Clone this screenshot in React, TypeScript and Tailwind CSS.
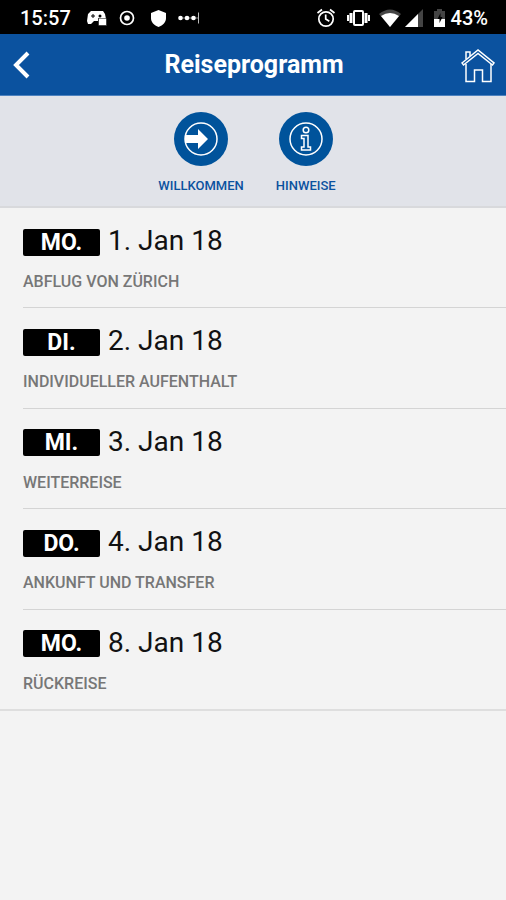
const days = [
  { id: 1, weekday: 'MO.', date: '1. Jan 18', title: 'ABFLUG VON ZÜRICH' },
  { id: 2, weekday: 'DI.', date: '2. Jan 18', title: 'INDIVIDUELLER AUFENTHALT' },
  { id: 3, weekday: 'MI.', date: '3. Jan 18', title: 'WEITERREISE' },
  { id: 4, weekday: 'DO.', date: '4. Jan 18', title: 'ANKUNFT UND TRANSFER' },
  { id: 5, weekday: 'MO.', date: '8. Jan 18', title: 'RÜCKREISE' },
]

function StatusBar() {
  return (
    <div className="flex h-[34px] items-center justify-between bg-black pt-0.5 pr-[18px] pl-5 text-xl font-medium text-white">
      <div className="flex items-center">
        <span>15:57</span>
        {/* Controller with lock */}
        <svg className="ml-4" width="20" height="18" viewBox="0 0 20 18" fill="#fff">
          <path d="M4 2h12l2 3 1 5h-8v2H7l-3 3H1l-1-3 1-7z" />
          <path d="M6 5v4M4 7h4" stroke="#000" strokeWidth="1" />
          <circle cx="13" cy="7" r="1.5" fill="#000" />
          <rect x="11.5" y="9.5" width="8" height="7" stroke="#000" strokeWidth="0.5" />
        </svg>
        <svg className="ml-3" width="16" height="16" viewBox="0 0 16 16" fill="none" stroke="#fff">
          <circle cx="8" cy="8" r="6.5" strokeWidth="1.7" />
          <circle cx="8" cy="8" r="2.8" fill="#fff" stroke="none" />
        </svg>
        <svg className="ml-4" width="15" height="17" viewBox="0 0 15 17" fill="#fff">
          <path d="M7.5 0 15 3v5c0 4-3 7.5-7.5 9C3 15.5 0 12 0 8V3z" />
        </svg>
        <svg className="ml-3" width="22" height="14" viewBox="0 0 22 14" fill="#fff">
          <path d="M2 7h18" stroke="#888" strokeWidth="1" />
          <circle cx="2.5" cy="7" r="2.3" />
          <circle cx="9" cy="7" r="2.3" />
          <circle cx="15.5" cy="7" r="2.3" />
          <path d="M20.5 1.5v11" stroke="#bbb" strokeWidth="1" />
        </svg>
      </div>
      <div className="flex items-center">
        {/* Alarm */}
        <svg width="20" height="20" viewBox="0 0 20 20" fill="none" stroke="#fff" strokeWidth="1.7">
          <circle cx="10" cy="11" r="7.2" />
          <path d="M1.5 5 6 1.5M18.5 5 14 1.5M9.7 6.5V11l3.6 2.3" />
        </svg>
        {/* Vibrate */}
        <svg className="ml-2.5" width="25" height="20" viewBox="0 0 25 20" fill="none" stroke="#fff" strokeWidth="2">
          <rect x="8" y="3" width="9" height="14" rx="1" />
          <path d="M5 5v10M20 5v10" strokeWidth="3" />
          <path d="M2 7v6M23 7v6" strokeWidth="2" />
        </svg>
        {/* Wifi */}
        <svg className="ml-2" width="22" height="18" viewBox="0 0 22 18">
          <path d="M0 5Q11-4 22 5L11 18z" fill="#444" />
          <path d="M2 7Q11 1 20 7L11 18z" fill="#fff" />
        </svg>
        {/* Signal */}
        <svg className="ml-1" width="18" height="18" viewBox="0 0 18 18">
          <path d="M18 0v18H0z" fill="#444" />
          <path d="M13 5v13H0z" fill="#fff" />
        </svg>
        {/* Battery */}
        <svg className="ml-2" width="16" height="20" viewBox="0 0 16 20">
          <path d="M3 3h3V1h5v2h3v8H3z" fill="#444" />
          <path d="M3 11h11v8H3z" fill="#fff" />
          <path d="m9.5 5-3 6h2v4l3-6h-2z" fill="#000" />
        </svg>
        <span className="ml-1">43%</span>
      </div>
    </div>
  )
}

export default function App() {
  return (
    <div className="min-h-screen bg-[#f3f3f3] font-['Roboto',sans-serif]">
      <StatusBar />

      {/* Title bar */}
      <header className="flex h-[62px] items-center justify-between border-b border-[#4d82bf] bg-[#0b529f] pr-[10px] pl-3 text-white">
        <button type="button" aria-label="Zurück" className="flex w-9">
          <svg width="20" height="28" viewBox="0 0 20 28" fill="none" stroke="#fff" strokeWidth="4">
            <path d="M16 2 4 14l12 12" />
          </svg>
        </button>
        <h1 className="text-[25px] leading-8 font-bold">Reiseprogramm</h1>
        <button type="button" aria-label="Startseite" className="flex w-9 justify-end">
          <svg width="36" height="36" viewBox="0 0 36 36" fill="none" stroke="#fff" strokeWidth="1.5">
            <path d="M2 16 18 3l16 13-1.5 2L18 6.5 3.5 18z" />
            <path d="M6 17v17.500h8.500V23h8v11.500H31V17" />
            <path d="M6 12V5h4v4" />
          </svg>
        </button>
      </header>

      {/* Shortcuts */}
      <nav className="flex h-28 justify-center gap-8 border-b-2 border-[#d8d9dc] bg-[#e1e3e9] pt-4 pr-3 text-[13px] leading-4 font-medium text-[#0b529f]">
        <a href="#willkommen" className="flex flex-col items-center gap-3">
          <svg width="54" height="54" viewBox="0 0 54 54">
            <circle cx="27" cy="27" r="27" fill="#00539b" />
            <circle cx="27" cy="27" r="16" fill="none" stroke="#fff" strokeWidth="1.5" />
            <path d="M11 23h13v-6l10 10-10 10v-6H11z" fill="#fff" />
          </svg>
          WILLKOMMEN
        </a>
        <a href="#hinweise" className="flex flex-col items-center gap-3">
          <svg width="54" height="54" viewBox="0 0 54 54" fill="none" stroke="#fff" strokeWidth="1.5">
            <circle cx="27" cy="27" r="27" fill="#00539b" stroke="none" />
            <circle cx="27" cy="27" r="16" />
            <circle cx="27" cy="18" r="2.8" />
            <path d="M22.5 23.5H29V35h2.5v3h-9v-3H25v-8.500h-2.500z" />
          </svg>
          HINWEISE
        </a>
      </nav>

      {/* Days */}
      <ul className="flex min-h-[503px] flex-col border-b-2 border-[#dedede]">
        {days.map((day) => (
          <li key={day.id} className="ml-[23px] flex-1 border-b border-[#d4d4d4] pt-4 last:border-b-0">
            <div className="flex items-center gap-2">
              <span className="mt-0.5 w-[77px] rounded-xs bg-black text-center text-[23px] leading-[27px] font-bold text-white">
                {day.weekday}
              </span>
              <span className="text-[28px] leading-[34px] text-[#111]">{day.date}</span>
            </div>
            <p className="mt-3.5 text-base leading-5 font-medium text-[#777]">{day.title}</p>
          </li>
        ))}
      </ul>
    </div>
  )
}
